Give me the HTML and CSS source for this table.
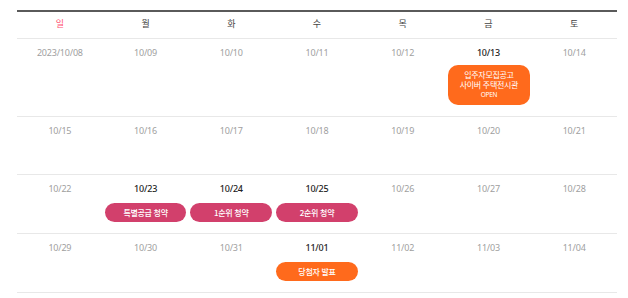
FILE: index.html
```html
<!DOCTYPE html>
<html lang="ko">
<head>
<meta charset="utf-8">
<link rel="stylesheet" href="styles.css">
</head>
<body>
<div class="cal">
  <div class="row head">
    <div class="hcell sun">일</div>
    <div class="hcell">월</div>
    <div class="hcell">화</div>
    <div class="hcell">수</div>
    <div class="hcell">목</div>
    <div class="hcell">금</div>
    <div class="hcell">토</div>
  </div>
  <div class="row">
    <div class="cell"><span class="date">2023/10/08</span></div>
    <div class="cell"><span class="date">10/09</span></div>
    <div class="cell"><span class="date">10/10</span></div>
    <div class="cell"><span class="date">10/11</span></div>
    <div class="cell"><span class="date">10/12</span></div>
    <div class="cell"><span class="date on">10/13</span>
      <div class="box orange"><span class="line">입주자모집공고</span><span class="line">사이버 주택전시관</span><span class="line small">OPEN</span></div>
    </div>
    <div class="cell"><span class="date">10/14</span></div>
  </div>
  <div class="row">
    <div class="cell"><span class="date">10/15</span></div>
    <div class="cell"><span class="date">10/16</span></div>
    <div class="cell"><span class="date">10/17</span></div>
    <div class="cell"><span class="date">10/18</span></div>
    <div class="cell"><span class="date">10/19</span></div>
    <div class="cell"><span class="date">10/20</span></div>
    <div class="cell"><span class="date">10/21</span></div>
  </div>
  <div class="row">
    <div class="cell"><span class="date">10/22</span></div>
    <div class="cell"><span class="date on">10/23</span><div class="pill pink">특별공급 청약</div></div>
    <div class="cell"><span class="date on">10/24</span><div class="pill pink">1순위 청약</div></div>
    <div class="cell"><span class="date on">10/25</span><div class="pill pink">2순위 청약</div></div>
    <div class="cell"><span class="date">10/26</span></div>
    <div class="cell"><span class="date">10/27</span></div>
    <div class="cell"><span class="date">10/28</span></div>
  </div>
  <div class="row">
    <div class="cell"><span class="date">10/29</span></div>
    <div class="cell"><span class="date">10/30</span></div>
    <div class="cell"><span class="date">10/31</span></div>
    <div class="cell"><span class="date on">11/01</span><div class="pill orange">당첨자 발표</div></div>
    <div class="cell"><span class="date">11/02</span></div>
    <div class="cell"><span class="date">11/03</span></div>
    <div class="cell"><span class="date">11/04</span></div>
  </div>
</div>
</body>
</html>
```

FILE: styles.css
```css
html, body {
  margin: 0;
  padding: 0;
  background: #fff;
}
body {
  font-family: "Noto Sans", "Noto Sans CJK KR", sans-serif;
}
.cal {
  width: 600px;
  margin: 10px 0 0 17px;
  border-top: 2px solid #5a5a5a;
}
.row {
  display: grid;
  grid-template-columns: repeat(7, 1fr);
  border-bottom: 1px solid #e8e8e8;
}
.hcell {
  height: 26px;
  line-height: 24px;
  text-align: center;
  font-size: 9px;
  color: #444;
  font-family: "Noto Sans CJK KR", sans-serif;
}
.hcell.sun {
  color: #ff4f72;
}
.cell {
  box-sizing: border-box;
  min-height: 57px;
  padding: 8px 1px 11px 1px;
  display: flex;
  flex-direction: column;
  align-items: center;
}
.date {
  display: block;
  height: 12px;
  line-height: 12px;
  font-size: 9px;
  color: #a0a0a0;
  letter-spacing: -0.2px;
}
.date.on {
  color: #222;
  font-weight: 500;
}
.pill {
  align-self: stretch;
  margin: 8px 1px 0 1px;
  height: 19px;
  line-height: 19px;
  border-radius: 10px;
  color: #fff;
  text-align: center;
  font-size: 8px;
  font-family: "Noto Sans CJK KR", sans-serif;
  font-weight: 500;
  letter-spacing: -0.3px;
}
.box {
  align-self: stretch;
  margin: 6px 0 0 1px;
  height: 40px;
  box-sizing: border-box;
  padding-top: 5px;
  border-radius: 10px;
  color: #fff;
  text-align: center;
  font-family: "Noto Sans CJK KR", sans-serif;
  letter-spacing: -0.3px;
  display: flex;
  flex-direction: column;
  align-items: center;
}
.box .line {
  display: block;
  height: 10px;
  line-height: 10px;
  font-size: 8px;
}
.box .small {
  font-size: 6.5px;
  font-family: "Noto Sans", sans-serif;
}
.pink {
  background: #d2406c;
}
.orange {
  background: #ff6a1c;
}
```
